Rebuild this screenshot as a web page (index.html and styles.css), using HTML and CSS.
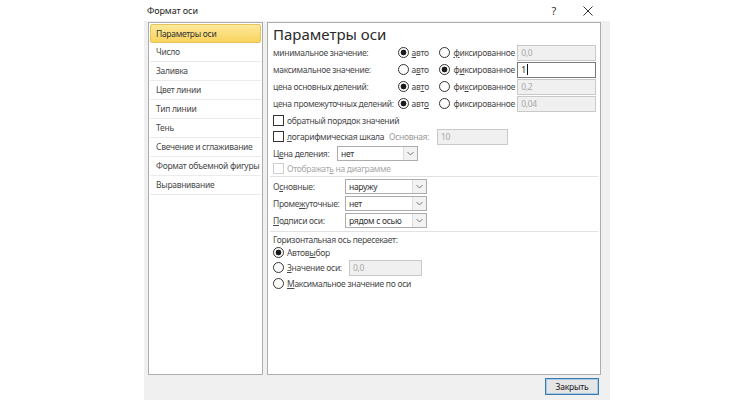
FILE: index.html
```html
<!DOCTYPE html>
<html lang="ru">
<head>
  <meta charset="UTF-8">
  <title>Формат оси</title>
  <link rel="stylesheet" href="styles.css">
</head>
<body>
  <div class="dialog">
    <div class="titlebar">
      <span class="title">Формат оси</span>
      <span class="help">?</span>
      <svg class="close" width="10" height="10" viewBox="0 0 10 10">
        <path d="M0.5 0.5L9.5 9.5M9.5 0.5L0.5 9.5" stroke="#333" stroke-width="1" fill="none"/>
      </svg>
    </div>

    <div class="content">
      <ul class="nav">
        <li class="active">Параметры оси</li>
        <li>Число</li>
        <li>Заливка</li>
        <li>Цвет линии</li>
        <li>Тип линии</li>
        <li>Тень</li>
        <li>Свечение и сглаживание</li>
        <li>Формат объемной фигуры</li>
        <li>Выравнивание</li>
      </ul>

      <div class="panel">
        <h2>Параметры оси</h2>

        <!-- min / max / units -->
        <div class="vrow">
          <span class="vlabel">минимальное значение:</span>
          <span class="opt opt-auto"><i class="radio on"></i><u>а</u>вто</span>
          <span class="opt opt-fix"><i class="radio"></i><u>ф</u>иксированное</span>
          <span class="field">0,0</span>
        </div>
        <div class="vrow">
          <span class="vlabel">максимальное значение:</span>
          <span class="opt opt-auto"><i class="radio"></i>а<u>в</u>то</span>
          <span class="opt opt-fix"><i class="radio on"></i>ф<u>и</u>ксированное</span>
          <span class="field live">1<b class="caret"></b></span>
        </div>
        <div class="vrow">
          <span class="vlabel">цена основных делений:</span>
          <span class="opt opt-auto"><i class="radio on"></i>ав<u>т</u>о</span>
          <span class="opt opt-fix"><i class="radio"></i>фи<u>к</u>сированное</span>
          <span class="field">0,2</span>
        </div>
        <div class="vrow">
          <span class="vlabel">цена промежуточных делений:</span>
          <span class="opt opt-auto"><i class="radio on"></i>авт<u>о</u></span>
          <span class="opt opt-fix"><i class="radio"></i>фиксированное</span>
          <span class="field">0,04</span>
        </div>

        <div class="crow row-a">
          <i class="check"></i><span>обратный порядок значений</span>
        </div>
        <div class="crow row-b">
          <i class="check"></i><span class="log-text"><u>л</u>огарифмическая шкала</span>
          <span class="base-label">Основная:</span>
          <span class="field field-base">10</span>
        </div>
        <div class="crow row-a">
          <span class="unit-label">Ц<u>е</u>на деления:</span>
          <span class="select select-unit"><span class="val">нет</span><span class="arrow"><svg width="7" height="5" viewBox="0 0 7 5"><path d="M0.5 1L3.5 4L6.5 1" stroke="#777" fill="none"/></svg></span></span>
        </div>
        <div class="crow row-c off">
          <i class="check"></i><span>Отображат<u>ь</u> на диаграмме</span>
        </div>

        <div class="sep sep-top"></div>

        <div class="srow">
          <span class="slabel">О<u>с</u>новные:</span>
          <span class="select"><span class="val">наружу</span><span class="arrow"><svg width="7" height="5" viewBox="0 0 7 5"><path d="M0.5 1L3.5 4L6.5 1" stroke="#777" fill="none"/></svg></span></span>
        </div>
        <div class="srow">
          <span class="slabel">Проме<u>ж</u>уточные:</span>
          <span class="select"><span class="val">нет</span><span class="arrow"><svg width="7" height="5" viewBox="0 0 7 5"><path d="M0.5 1L3.5 4L6.5 1" stroke="#777" fill="none"/></svg></span></span>
        </div>
        <div class="srow">
          <span class="slabel"><u>П</u>одписи оси:</span>
          <span class="select"><span class="val">рядом с осью</span><span class="arrow"><svg width="7" height="5" viewBox="0 0 7 5"><path d="M0.5 1L3.5 4L6.5 1" stroke="#777" fill="none"/></svg></span></span>
        </div>

        <div class="sep sep-bottom"></div>

        <div class="cross-title">Горизонтальная ось пересекает:</div>
        <div class="crow row-d">
          <i class="radio on"></i><span>Автов<u>ы</u>бор</span>
        </div>
        <div class="crow row-e">
          <i class="radio"></i><span class="cross-label"><u>З</u>начение оси:</span>
          <span class="field field-cross">0,0</span>
        </div>
        <div class="crow row-f">
          <i class="radio"></i><span><u>М</u>аксимальное значение по оси</span>
        </div>
      </div>
    </div>

    <div class="footer">
      <button class="btn">Закрыть</button>
    </div>
  </div>
</body>
</html>
```

FILE: styles.css
```css
* {
  box-sizing: border-box;
}

body {
  margin: 0;
  background: #fff;
  font-family: "Noto Sans", "DejaVu Sans", sans-serif;
  font-size: 8.5px;
  letter-spacing: -0.3px;
  color: #4a4a4a;
}

u {
  text-decoration: underline;
}

.dialog {
  margin-left: 144px;
  width: 466px;
  height: 400px;
  background: #f0f0f0;
  display: flex;
  flex-direction: column;
}

.titlebar {
  height: 21px;
  background: #fff;
  display: flex;
  align-items: center;
  padding: 0 17px 0 3px;
}

.title {
  flex: 1;
  font-size: 9px;
  letter-spacing: -0.1px;
  color: #222;
}

.help {
  font-size: 11px;
  color: #333;
  margin-right: 27px;
}

/* main area */
.content {
  display: flex;
  gap: 4px;
  padding: 1px 9px 0 4px;
  height: 354px;
}

.nav {
  list-style: none;
  margin: 0;
  padding: 1px;
  width: 115px;
  background: #fff;
  border: 1px solid #adadad;
}

.nav li {
  height: 19px;
  line-height: 18px;
  padding-left: 6px;
  border-bottom: 1px solid #ebebeb;
  white-space: nowrap;
}

.nav li.active {
  background: linear-gradient(#fde99a, #f9d25e);
  border: 1px solid #e7c25d;
  border-radius: 2px;
  color: #333;
  padding-left: 5px;
}

.panel {
  width: 334px;
  background: #fff;
  border: 1px solid #adadad;
  padding: 0 4px 0 5px;
}

.panel h2 {
  margin: 2px 0 0;
  font-size: 15px;
  line-height: 19px;
  letter-spacing: 0;
  font-weight: normal;
  color: #2a2a2a;
}

.vrow,
.crow,
.srow {
  display: flex;
  align-items: center;
  white-space: nowrap;
}

.vrow {
  height: 17px;
}

.vlabel {
  width: 124px;
}

.opt {
  display: flex;
  align-items: center;
}

.opt .radio {
  margin-left: 1px;
}

.opt-auto {
  width: 42px;
}

.opt-fix {
  width: 79px;
}

.radio {
  flex: none;
  width: 11px;
  height: 11px;
  border: 1px solid #333;
  border-radius: 50%;
  margin-right: 3px;
  background: #fff;
}

.radio.on {
  background: radial-gradient(circle, #1a1a1a 0, #1a1a1a 2.6px, #fff 3.2px);
}

.check {
  flex: none;
  width: 11px;
  height: 11px;
  border: 1px solid #333;
  margin-right: 3px;
  background: #fff;
}

.field {
  width: 79px;
  height: 16px;
  line-height: 14px;
  padding-left: 3px;
  border: 1px solid #c9c9c9;
  background: #f0f0f0;
  color: #a8a8a8;
}

.field.live {
  background: #fff;
  border-color: #7a7a7a;
  color: #222;
  display: flex;
  align-items: center;
}

.caret {
  display: inline-block;
  width: 1px;
  height: 11px;
  background: #111;
  margin-left: 1px;
}

.row-a {
  height: 16px;
}

.row-b {
  height: 17px;
}

.row-c {
  height: 15px;
}

.log-text {
  width: 102px;
}

.base-label {
  width: 48px;
  color: #9a9a9a;
}

.field-base {
  width: 71px;
}

.unit-label {
  width: 64px;
}

.select {
  display: flex;
  width: 82px;
  height: 15px;
  border: 1px solid #acacac;
  background: #fff;
  color: #333;
}

.select-unit {
  width: 81px;
}

.select .val {
  flex: 1;
  padding-left: 3px;
  line-height: 13px;
}

.select .arrow {
  width: 14px;
  border-left: 1px solid #dcdcdc;
  background: #f2f2f2;
  display: flex;
  align-items: center;
  justify-content: center;
}

.off {
  color: #a8a8a8;
}

.off .check {
  border-color: #cfcfcf;
}

.sep {
  height: 1px;
  background: #e2e2e2;
  margin: 0 -2px 0 -3px;
}

.sep-top {
  margin-bottom: 1px;
}

.sep-bottom {
  margin-top: 2px;
  margin-bottom: 2px;
}

.srow {
  height: 17px;
}

.slabel {
  width: 72px;
}

.cross-title {
  height: 12px;
  line-height: 12px;
}

.row-d {
  height: 13px;
}

.row-e {
  height: 17px;
}

.row-f {
  height: 15px;
}

.cross-label {
  width: 62px;
}

.field-cross {
  width: 73px;
}

/* bottom bar */
.footer {
  flex: 1;
  display: flex;
  justify-content: flex-end;
  align-items: flex-start;
  padding: 3px 11px 0 0;
}

.btn {
  width: 54px;
  height: 17px;
  padding: 0;
  font-family: inherit;
  font-size: 8.5px;
  letter-spacing: -0.2px;
  color: #222;
  background: #e5e5e5;
  border: 1px solid #3c7aad;
  box-shadow: inset 0 0 0 1px #a6cbe8;
}
```
